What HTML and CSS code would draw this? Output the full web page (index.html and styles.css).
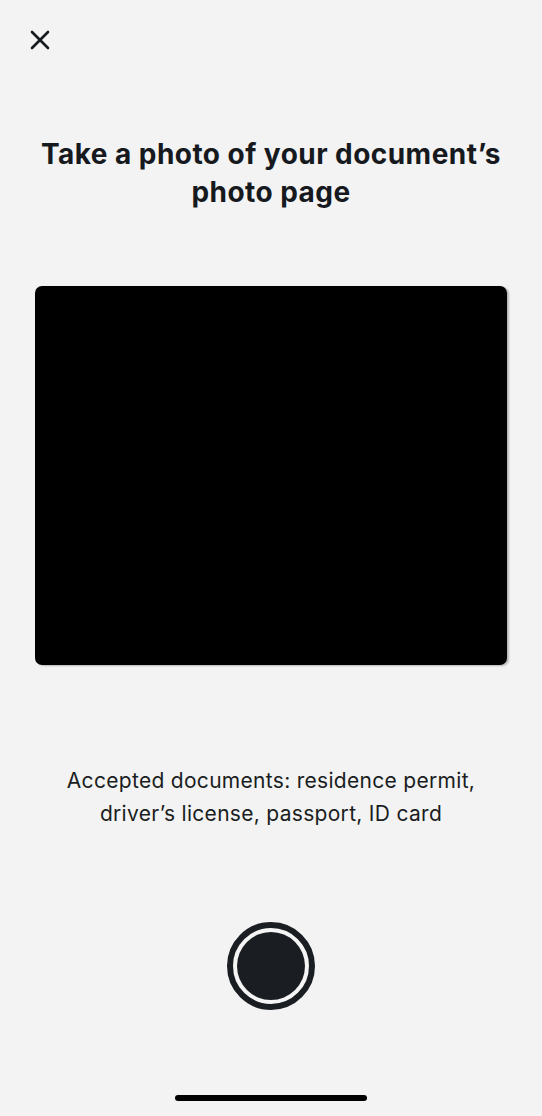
FILE: index.html
```html
<!DOCTYPE html>
<html>
<head>
<meta charset="utf-8">
<link rel="stylesheet" href="styles.css">
</head>
<body>
<div class="screen">
  <div class="topbar">
    <button class="close" aria-label="Close">
      <svg width="20" height="20" viewBox="0 0 20 20"><path d="M2 2 L18 18 M18 2 L2 18" stroke="#16191d" stroke-width="2.6" stroke-linecap="round" fill="none"/></svg>
    </button>
  </div>
  <h1 class="title">Take a photo of your document’s<br>photo page</h1>
  <div class="camera"></div>
  <p class="hint">Accepted documents: residence permit,<br>driver’s license, passport, ID card</p>
  <div class="shutter-wrap">
    <button class="shutter" aria-label="Take photo"><span class="shutter-inner"></span></button>
  </div>
  <div class="home-bar"></div>
</div>
</body>
</html>
```
FILE: styles.css
```css
* { box-sizing: border-box; }
html, body { margin: 0; padding: 0; }
body {
  background: #f3f3f3;
  font-family: Inter, "Noto Sans", sans-serif;
  color: #16191d;
}
.screen {
  width: 542px;
  height: 1116px;
  display: flex;
  flex-direction: column;
  align-items: center;
}
.topbar {
  width: 100%;
  padding: 30px 0 0 30px;
  height: 50px;
}
.close {
  border: 0;
  background: none;
  padding: 0;
  width: 20px;
  height: 20px;
  display: block;
}
.close svg { display: block; }
.title {
  margin: 85px 0 0;
  font-size: 28px;
  line-height: 38px;
  font-weight: 700;
  text-align: center;
  letter-spacing: 0.45px;
  white-space: nowrap;
}
.camera {
  margin-top: 75px;
  width: 472px;
  height: 379px;
  background: #000;
  border-radius: 7px;
  box-shadow: 2px 1px 2px rgba(0,0,0,0.25);
}
.hint {
  margin: 99px 0 0;
  font-size: 21px;
  line-height: 33px;
  text-align: center;
  color: #1a1d21;
  letter-spacing: 0.3px;
  white-space: nowrap;
}
.shutter-wrap {
  margin-top: 92px;
}
.shutter {
  width: 88px;
  height: 88px;
  border-radius: 50%;
  border: 6px solid #1a1e23;
  background: #f5f5f5;
  padding: 0;
  display: flex;
  align-items: center;
  justify-content: center;
}
.shutter-inner {
  width: 68px;
  height: 68px;
  border-radius: 50%;
  background: #1a1e23;
  display: block;
}
.home-bar {
  margin-top: 85px;
  width: 192px;
  height: 6px;
  border-radius: 3px;
  background: #000;
}
```
